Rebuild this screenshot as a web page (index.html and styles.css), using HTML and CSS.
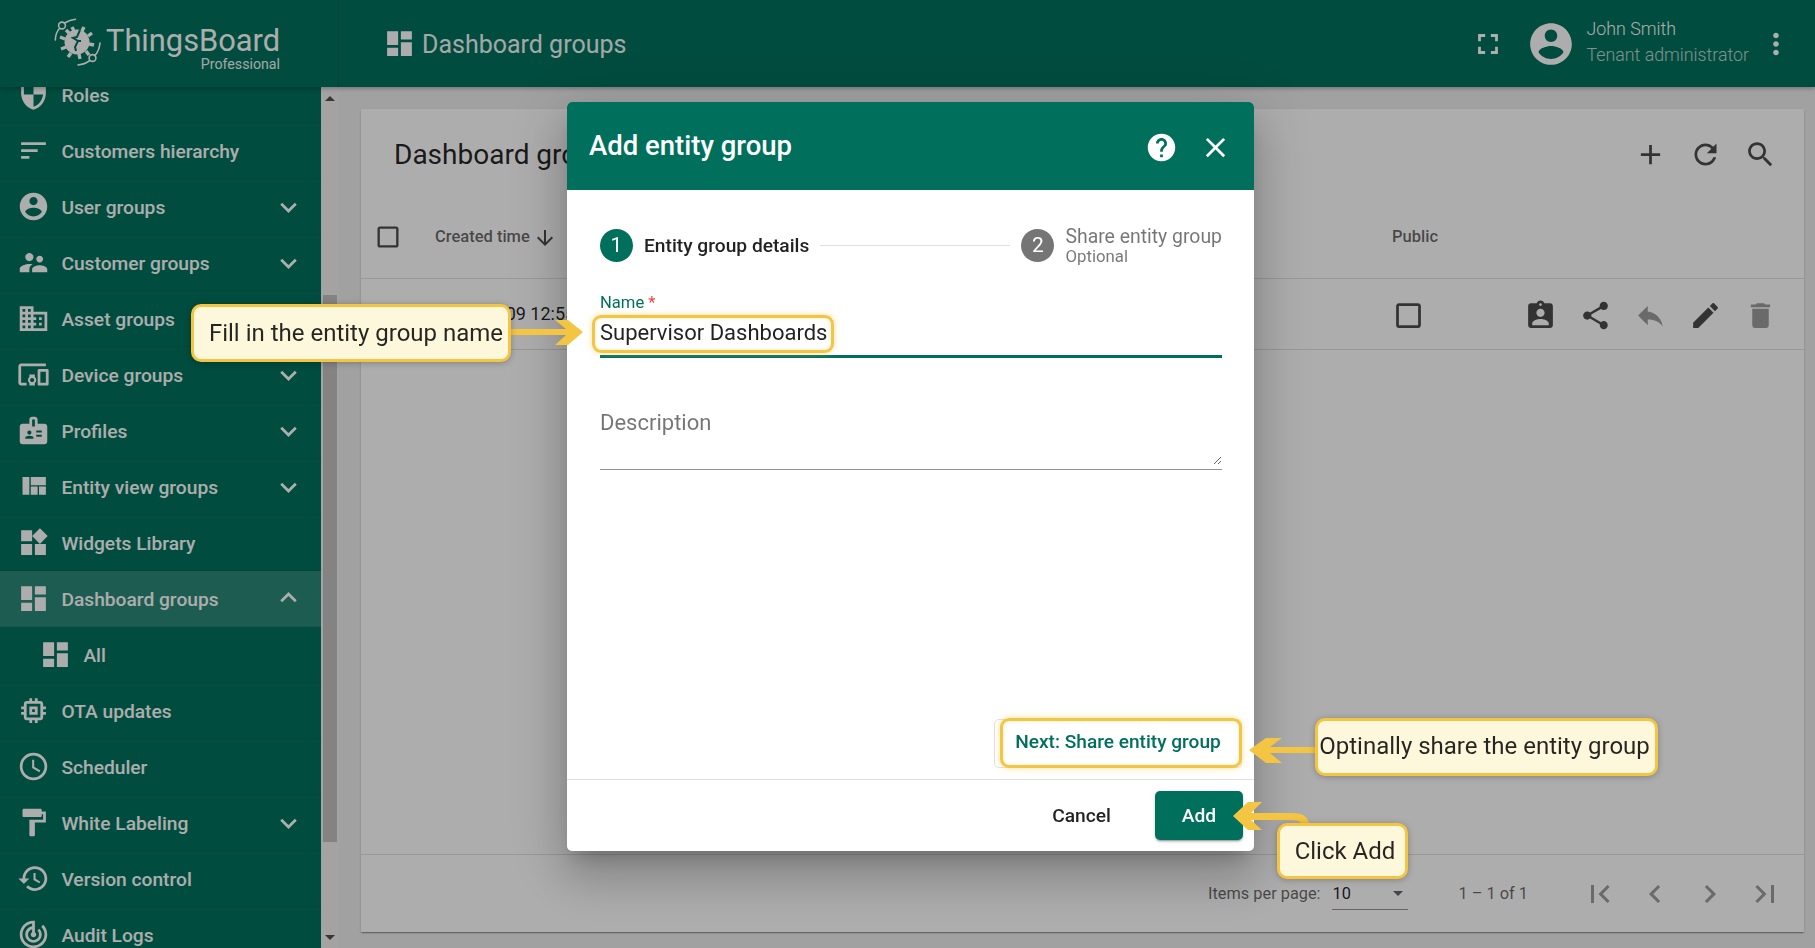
FILE: index.html
```html
<!DOCTYPE html>
<html lang="en">
<head>
<meta charset="utf-8">
<title>Add entity group</title>
<link rel="stylesheet" href="styles.css">
</head>
<body>
<svg class="sprite" aria-hidden="true">
<symbol id="i-dash" viewBox="0 0 24 24"><path d="M3 13h8V3H3v10zm0 8h8v-6H3v6zm10 0h8V11h-8v10zm0-18v6h8V3h-8z"/></symbol>
<symbol id="i-shield" viewBox="0 0 24 24"><path d="M12 1L3 5v6c0 5.55 3.84 10.74 9 12 5.16-1.26 9-6.45 9-12V5l-9-4zm0 10.99h7c-.53 4.12-3.28 7.79-7 8.94V12H5V6.3l7-3.11v8.8z"/></symbol>
<symbol id="i-sort" viewBox="0 0 24 24"><path d="M3 18h6v-2H3v2zM3 6v2h18V6H3zm0 7h12v-2H3v2z"/></symbol>
<symbol id="i-account" viewBox="0 0 24 24"><path d="M12 2C6.48 2 2 6.48 2 12s4.48 10 10 10 10-4.48 10-10S17.52 2 12 2zm0 3c1.66 0 3 1.34 3 3s-1.34 3-3 3-3-1.34-3-3 1.34-3 3-3zm0 14.2c-2.5 0-4.71-1.28-6-3.22.03-1.99 4-3.08 6-3.08 1.99 0 5.97 1.09 6 3.08-1.29 1.94-3.5 3.22-6 3.22z"/></symbol>
<symbol id="i-super" viewBox="0 0 24 24"><path d="M16.5 12c1.38 0 2.49-1.12 2.49-2.5S17.88 7 16.5 7C15.12 7 14 8.12 14 9.5s1.12 2.5 2.5 2.5zM9 11c1.66 0 2.99-1.34 2.99-3S10.66 5 9 5C7.34 5 6 6.34 6 8s1.34 3 3 3zm7.5 3c-1.83 0-5.5.92-5.5 2.75V19h11v-2.25c0-1.83-3.67-2.75-5.5-2.75zM9 13c-2.33 0-7 1.17-7 3.5V19h7v-2.25c0-.85.33-2.34 2.37-3.47C10.5 13.1 9.66 13 9 13z"/></symbol>
<symbol id="i-domain" viewBox="0 0 24 24"><path d="M12 7V3H2v18h20V7H12zM6 19H4v-2h2v2zm0-4H4v-2h2v2zm0-4H4V9h2v2zm0-4H4V5h2v2zm4 12H8v-2h2v2zm0-4H8v-2h2v2zm0-4H8V9h2v2zm0-4H8V5h2v2zm10 12h-8v-2h2v-2h-2v-2h2v-2h-2V9h8v10zm-2-8h-2v2h2v-2zm0 4h-2v2h2v-2z"/></symbol>
<symbol id="i-devices" viewBox="0 0 24 24"><path d="M3 6h18V4H3c-1.1 0-2 .9-2 2v12c0 1.1.9 2 2 2h4v-2H3V6zm10 6H9v1.78c-.61.55-1 1.33-1 2.22s.39 1.67 1 2.22V20h4v-1.78c.61-.55 1-1.34 1-2.22s-.39-1.67-1-2.22V12zm-2 5.5c-.83 0-1.5-.68-1.5-1.5s.67-1.5 1.5-1.5 1.5.68 1.5 1.5-.67 1.5-1.5 1.5zM22 8h-6c-.5 0-1 .5-1 1v10c0 .5.5 1 1 1h6c.5 0 1-.5 1-1V9c0-.5-.5-1-1-1zm-1 10h-4v-8h4v8z"/></symbol>
<symbol id="i-badge" viewBox="0 0 24 24"><path d="M20 7h-5V4c0-1.1-.9-2-2-2h-2c-1.1 0-2 .9-2 2v3H4c-1.1 0-2 .9-2 2v11c0 1.1.9 2 2 2h16c1.1 0 2-.9 2-2V9c0-1.1-.9-2-2-2zM9 12c.83 0 1.5.67 1.5 1.5S9.83 15 9 15s-1.5-.67-1.5-1.5S8.17 12 9 12zm3 6H6v-.43c0-.6.36-1.15.92-1.39.64-.28 1.34-.43 2.08-.43s1.44.15 2.08.43c.55.24.92.78.92 1.39V18zm1-9h-2V4h2v5zm5 7.5h-4V15h4v1.5zm0-3h-4V12h4v1.5z"/></symbol>
<symbol id="i-quilt" viewBox="0 0 24 24"><path d="M10 18h5v-6h-5v6zm-6 0h5V5H4v13zm12 0h5v-6h-5v6zM10 5v6h11V5H10z"/></symbol>
<symbol id="i-widgets" viewBox="0 0 24 24"><path d="M13 13v8h8v-8h-8zM3 21h8v-8H3v8zM3 3v8h8V3H3zm13.66-1.31L11 7.34 16.66 13l5.66-5.66-5.66-5.65z"/></symbol>
<symbol id="i-memory" viewBox="0 0 24 24"><path d="M15 9H9v6h6V9zm-2 4h-2v-2h2v2zm8-2V9h-2V7c0-1.1-.9-2-2-2h-2V3h-2v2h-2V3H9v2H7c-1.1 0-2 .9-2 2v2H3v2h2v2H3v2h2v2c0 1.1.9 2 2 2h2v2h2v-2h2v2h2v-2h2c1.1 0 2-.9 2-2v-2h2v-2h-2v-2h2zm-4 6H7V7h10v10z"/></symbol>
<symbol id="i-schedule" viewBox="0 0 24 24"><path d="M11.99 2C6.47 2 2 6.48 2 12s4.47 10 9.99 10C17.52 22 22 17.52 22 12S17.52 2 11.99 2zM12 20c-4.42 0-8-3.58-8-8s3.58-8 8-8 8 3.58 8 8-3.58 8-8 8zm.5-13H11v6l5.25 3.15.75-1.23-4.5-2.67z"/></symbol>
<symbol id="i-paint" viewBox="0 0 24 24"><path d="M18 4V3c0-.55-.45-1-1-1H5c-.55 0-1 .45-1 1v4c0 .55.45 1 1 1h12c.55 0 1-.45 1-1V6h1v4H9v11c0 .55.45 1 1 1h2c.55 0 1-.45 1-1v-9h8V4h-3z"/></symbol>
<symbol id="i-history" viewBox="0 0 24 24"><path d="M13 3c-4.97 0-9 4.03-9 9H1l3.89 3.89.07.14L9 12H6c0-3.87 3.13-7 7-7s7 3.13 7 7-3.13 7-7 7c-1.93 0-3.68-.79-4.94-2.06l-1.42 1.42C8.27 19.99 10.51 21 13 21c4.97 0 9-4.03 9-9s-4.03-9-9-9zm-1 5v5l4.28 2.54.72-1.21-3.5-2.08V8H12z"/></symbol>
<symbol id="i-track" viewBox="0 0 24 24"><path d="M19.07 4.93l-1.41 1.41C19.1 7.79 20 9.79 20 12c0 4.42-3.58 8-8 8s-8-3.58-8-8c0-4.08 3.05-7.44 7-7.93v2.02C8.16 6.57 6 9.03 6 12c0 3.31 2.69 6 6 6s6-2.69 6-6c0-1.66-.67-3.16-1.76-4.24l-1.41 1.41C15.55 9.9 16 10.9 16 12c0 2.21-1.79 4-4 4s-4-1.79-4-4c0-1.86 1.28-3.41 3-3.86v2.14c-.6.35-1 .98-1 1.72 0 1.1.9 2 2 2s2-.9 2-2c0-.74-.4-1.38-1-1.72V2h-1C6.48 2 2 6.48 2 12s4.48 10 10 10 10-4.48 10-10c0-2.76-1.12-5.26-2.93-7.07z"/></symbol>
<symbol id="i-more" viewBox="0 0 24 24"><path d="M16.59 8.59L12 13.17 7.41 8.59 6 10l6 6 6-6z"/></symbol>
<symbol id="i-less" viewBox="0 0 24 24"><path d="M12 8l-6 6 1.41 1.41L12 10.83l4.59 4.58L18 14z"/></symbol>
<symbol id="i-full" viewBox="0 0 24 24"><path d="M7 14H5v5h5v-2H7v-3zm-2-4h2V7h3V5H5v5zm12 7h-3v2h5v-5h-2v3zM14 5v2h3v3h2V5h-5z"/></symbol>
<symbol id="i-vert" viewBox="0 0 24 24"><path d="M12 8c1.1 0 2-.9 2-2s-.9-2-2-2-2 .9-2 2 .9 2 2 2zm0 2c-1.1 0-2 .9-2 2s.9 2 2 2 2-.9 2-2-.9-2-2-2zm0 6c-1.1 0-2 .9-2 2s.9 2 2 2 2-.9 2-2-.9-2-2-2z"/></symbol>
<symbol id="i-add" viewBox="0 0 24 24"><path d="M19 13h-6v6h-2v-6H5v-2h6V5h2v6h6v2z"/></symbol>
<symbol id="i-refresh" viewBox="0 0 24 24"><path d="M17.65 6.35C16.2 4.9 14.21 4 12 4c-4.42 0-7.99 3.58-7.99 8s3.57 8 7.99 8c3.73 0 6.84-2.55 7.73-6h-2.08c-.82 2.33-3.04 4-5.65 4-3.31 0-6-2.69-6-6s2.69-6 6-6c1.66 0 3.14.69 4.22 1.78L13 11h7V4l-2.35 2.35z"/></symbol>
<symbol id="i-search" viewBox="0 0 24 24"><path d="M15.5 14h-.79l-.28-.27C15.41 12.59 16 11.11 16 9.5 16 5.91 13.09 3 9.5 3S3 5.91 3 9.5 5.91 16 9.5 16c1.61 0 3.09-.59 4.23-1.57l.27.28v.79l5 4.99L20.49 19l-4.99-5zm-6 0C7.01 14 5 11.99 5 9.5S7.01 5 9.5 5 14 7.01 14 9.5 11.99 14 9.5 14z"/></symbol>
<symbol id="i-assign" viewBox="0 0 24 24"><path d="M19 3h-4.18C14.4 1.84 13.3 1 12 1c-1.3 0-2.4.84-2.82 2H5c-1.1 0-2 .9-2 2v14c0 1.1.9 2 2 2h14c1.1 0 2-.9 2-2V5c0-1.1-.9-2-2-2zm-7 0c.55 0 1 .45 1 1s-.45 1-1 1-1-.45-1-1 .45-1 1-1zm0 4c1.66 0 3 1.34 3 3s-1.34 3-3 3-3-1.34-3-3 1.34-3 3-3zm6 12H6v-1.4c0-2 4-3.1 6-3.1s6 1.1 6 3.1V19z"/></symbol>
<symbol id="i-share" viewBox="0 0 24 24"><path d="M18 16.08c-.76 0-1.44.3-1.96.77L8.91 12.7c.05-.23.09-.46.09-.7s-.04-.47-.09-.7l7.05-4.11c.54.5 1.25.81 2.04.81 1.66 0 3-1.34 3-3s-1.34-3-3-3-3 1.34-3 3c0 .24.04.47.09.7L8.04 9.81C7.5 9.31 6.79 9 6 9c-1.66 0-3 1.34-3 3s1.34 3 3 3c.79 0 1.5-.31 2.04-.81l7.12 4.16c-.05.21-.08.43-.08.65 0 1.61 1.31 2.92 2.92 2.92 1.61 0 2.92-1.31 2.92-2.92s-1.31-2.92-2.92-2.92z"/></symbol>
<symbol id="i-reply" viewBox="0 0 24 24"><path d="M10 9V5l-7 7 7 7v-4.1c5 0 8.5 1.6 11 5.1-1-5-4-10-11-11z"/></symbol>
<symbol id="i-edit" viewBox="0 0 24 24"><path d="M3 17.25V21h3.75L17.81 9.94l-3.75-3.75L3 17.25zM20.71 7.04c.39-.39.39-1.02 0-1.41l-2.34-2.34c-.39-.39-1.02-.39-1.41 0l-1.83 1.83 3.75 3.75 1.83-1.83z"/></symbol>
<symbol id="i-delete" viewBox="0 0 24 24"><path d="M6 19c0 1.1.9 2 2 2h8c1.1 0 2-.9 2-2V7H6v12zM19 4h-3.5l-1-1h-5l-1 1H5v2h14V4z"/></symbol>
<symbol id="i-help" viewBox="0 0 24 24"><path d="M12 2C6.48 2 2 6.48 2 12s4.48 10 10 10 10-4.48 10-10S17.52 2 12 2zm1 17h-2v-2h2v2zm2.07-7.75l-.9.92C13.45 12.9 13 13.5 13 15h-2v-.5c0-1.1.45-2.1 1.17-2.83l1.24-1.26c.37-.36.59-.86.59-1.41 0-1.1-.9-2-2-2s-2 .9-2 2H8c0-2.21 1.79-4 4-4s4 1.79 4 4c0 .88-.36 1.68-.93 2.25z"/></symbol>
<symbol id="i-close" viewBox="0 0 24 24"><path d="M19 6.41L17.59 5 12 10.59 6.41 5 5 6.41 10.59 12 5 17.59 6.41 19 12 13.41 17.59 19 19 17.59 13.41 12z"/></symbol>
<symbol id="i-first" viewBox="0 0 24 24"><path d="M18.41 16.59L13.82 12l4.59-4.59L17 6l-6 6 6 6zM6 6h2v12H6z"/></symbol>
<symbol id="i-left" viewBox="0 0 24 24"><path d="M15.41 7.41L14 6l-6 6 6 6 1.41-1.41L10.83 12z"/></symbol>
<symbol id="i-right" viewBox="0 0 24 24"><path d="M10 6L8.59 7.41 13.17 12l-4.58 4.59L10 18l6-6z"/></symbol>
<symbol id="i-last" viewBox="0 0 24 24"><path d="M5.59 7.41L10.18 12l-4.59 4.59L7 18l6-6-6-6zM16 6h2v12h-2z"/></symbol>
<symbol id="i-down" viewBox="0 0 24 24"><path d="M20 12l-1.41-1.41L13 16.17V4h-2v12.17l-5.58-5.59L4 12l8 8 8-8z"/></symbol>
<symbol id="i-check" viewBox="0 0 24 24"><path d="M19 5v14H5V5h14m0-2H5c-1.1 0-2 .9-2 2v14c0 1.1.9 2 2 2h14c1.1 0 2-.9 2-2V5c0-1.1-.9-2-2-2z"/></symbol>
</svg>

<div class="app">
  <header class="topbar">
    <div class="brand">
      <svg class="brand-logo" viewBox="0 0 48 48">
        <g class="logo-line">
          <circle cx="8" cy="7.5" r="3.4"/>
          <circle cx="38.5" cy="40" r="3.4"/>
          <path d="M10.500 5C14 3 17 1.800 21.500 1.300M5.500 10.500C3 13 1.600 16 1.300 22"/>
          <path d="M35.800 42.500C32 45.400 28 46.600 24 47M41 37.500C44 34 45.500 30.500 46 25"/>
        </g>
        <g class="logo-spike">
          <path d="M20 13l-2-4M28 13l2-4M34 18l4-3M35 26l5 1M32 33l3 4M25 36l1 5M17 35l-3 4M12 29l-5 2M11 21l-5-2M15 15l-3-3"/>
        </g>
        <circle class="logo-core" cx="23" cy="24" r="12.500"/>
        <path class="logo-bolt" d="M26 12l-3 7-4 1 5 3-3 6 1 4M27 23l-3 0"/>
      </svg>
      <div class="brand-text">
        <span class="brand-name">ThingsBoard</span>
        <span class="brand-sub">Professional</span>
      </div>
    </div>
    <svg class="ic-title"><use href="#i-dash"/></svg>
    <span class="page-title">Dashboard groups</span>
    <span class="grow"></span>
    <svg class="ic-34 gap-full"><use href="#i-full"/></svg>
    <svg class="ic-avatar"><use href="#i-account"/></svg>
    <div class="user">
      <span class="user-name">John Smith</span>
      <span class="user-role">Tenant administrator</span>
    </div>
    <svg class="ic-34 gap-vert"><use href="#i-vert"/></svg>
  </header>

  <div class="body">
    <nav class="sidebar">
      <div class="menu">
        <a class="item"><svg class="ic"><use href="#i-shield"/></svg><span class="label">Roles</span></a>
        <a class="item"><svg class="ic"><use href="#i-sort"/></svg><span class="label">Customers hierarchy</span></a>
        <a class="item"><svg class="ic"><use href="#i-account"/></svg><span class="label">User groups</span><svg class="ic"><use href="#i-more"/></svg></a>
        <a class="item"><svg class="ic"><use href="#i-super"/></svg><span class="label">Customer groups</span><svg class="ic"><use href="#i-more"/></svg></a>
        <a class="item"><svg class="ic"><use href="#i-domain"/></svg><span class="label">Asset groups</span><svg class="ic"><use href="#i-more"/></svg></a>
        <a class="item"><svg class="ic"><use href="#i-devices"/></svg><span class="label">Device groups</span><svg class="ic"><use href="#i-more"/></svg></a>
        <a class="item"><svg class="ic"><use href="#i-badge"/></svg><span class="label">Profiles</span><svg class="ic"><use href="#i-more"/></svg></a>
        <a class="item"><svg class="ic"><use href="#i-quilt"/></svg><span class="label">Entity view groups</span><svg class="ic"><use href="#i-more"/></svg></a>
        <a class="item"><svg class="ic"><use href="#i-widgets"/></svg><span class="label">Widgets Library</span></a>
        <a class="item active"><svg class="ic"><use href="#i-dash"/></svg><span class="label">Dashboard groups</span><svg class="ic"><use href="#i-less"/></svg></a>
        <a class="item sub"><svg class="ic"><use href="#i-dash"/></svg><span class="label">All</span></a>
        <a class="item"><svg class="ic"><use href="#i-memory"/></svg><span class="label">OTA updates</span></a>
        <a class="item"><svg class="ic"><use href="#i-schedule"/></svg><span class="label">Scheduler</span></a>
        <a class="item"><svg class="ic"><use href="#i-paint"/></svg><span class="label">White Labeling</span><svg class="ic"><use href="#i-more"/></svg></a>
        <a class="item"><svg class="ic"><use href="#i-history"/></svg><span class="label">Version control</span></a>
        <a class="item"><svg class="ic"><use href="#i-track"/></svg><span class="label">Audit Logs</span></a>
      </div>
    </nav>
    <div class="scrollbar">
      <span class="sb-arrow"><i class="tri-up"></i></span>
      <span class="sb-thumb"></span>
      <span class="grow"></span>
      <span class="sb-arrow"><i class="tri-down"></i></span>
    </div>
    <main class="main">
      <section class="card">
        <div class="card-head">
          <h1 class="card-title">Dashboard groups</h1>
          <div class="icon-row">
            <svg class="ic"><use href="#i-add"/></svg>
            <svg class="ic"><use href="#i-refresh"/></svg>
            <svg class="ic"><use href="#i-search"/></svg>
          </div>
        </div>
        <div class="row head-row">
          <svg class="ic-28"><use href="#i-check"/></svg>
          <span class="th">Created time <svg class="ic-sort"><use href="#i-down"/></svg></span>
          <span class="th">Public</span>
          <span></span>
        </div>
        <div class="row data-row">
          <svg class="ic-28"><use href="#i-check"/></svg>
          <span class="td">2023-03-09 12:55:17</span>
          <svg class="ic"><use href="#i-check"/></svg>
          <div class="icon-row">
            <svg class="ic"><use href="#i-assign"/></svg>
            <svg class="ic"><use href="#i-share"/></svg>
            <svg class="ic dim"><use href="#i-reply"/></svg>
            <svg class="ic"><use href="#i-edit"/></svg>
            <svg class="ic dim"><use href="#i-delete"/></svg>
          </div>
        </div>
        <div class="grow"></div>
        <div class="pager">
          <span class="pager-label">Items per page:</span>
          <span class="pager-select">10<i class="tri-select"></i></span>
          <span class="pager-range">1 – 1 of 1</span>
          <div class="icon-row pager-icons">
            <svg class="ic-36 dim"><use href="#i-first"/></svg>
            <svg class="ic-36 dim"><use href="#i-left"/></svg>
            <svg class="ic-36 dim"><use href="#i-right"/></svg>
            <svg class="ic-36 dim"><use href="#i-last"/></svg>
          </div>
        </div>
      </section>
    </main>
  </div>
</div>

<div class="backdrop"></div>

<div class="dialog">
  <div class="dlg-head">
    <h2 class="dlg-title">Add entity group</h2>
    <svg class="ic"><use href="#i-help"/></svg>
    <svg class="ic"><use href="#i-close"/></svg>
  </div>
  <div class="dlg-body">
    <div class="stepper">
      <span class="step-num on">1</span>
      <span class="step-title">Entity group details</span>
      <span class="step-line"></span>
      <span class="step-num off">2</span>
      <span class="step-text"><span class="step-title2">Share entity group</span><span class="step-opt">Optional</span></span>
    </div>
    <label class="name-label">Name <span class="req">*</span></label>
    <input class="name-input" type="text" value="Supervisor Dashboards">
    <div class="desc-field"><textarea class="desc" placeholder="Description"></textarea></div>
    <span class="grow"></span>
    <div class="next-row"><button class="next-btn" type="button">Next: Share entity group</button></div>
  </div>
  <div class="dlg-foot">
    <button class="cancel-btn" type="button">Cancel</button>
    <button class="add-btn" type="button">Add</button>
  </div>
</div>

<div class="hl hl-name"></div>
<div class="hl hl-next"></div>

<svg class="arrows" viewBox="0 0 1815 948">
  <path class="arrow-fill" d="M583 332L568 320H555L566 329H511V335H566L555 345H568Z"/>
  <path class="arrow-fill" d="M1249 750L1266 738H1282L1270 747H1316V753H1270L1282 763H1266Z"/>
  <path class="arrow-fill" d="M1233 816L1248 802H1262L1251 813V820L1262 830H1248Z"/>
  <path class="arrow-line" d="M1250 816.500H1293Q1306 816.500 1306 828"/>
</svg>

<div class="callout c-fill">Fill in the entity group name</div>
<div class="callout c-share">Optinally share the entity group</div>
<div class="callout c-add">Click Add</div>
</body>
</html>
```

FILE: styles.css
```css
* { box-sizing: border-box; }
html, body { margin: 0; height: 100%; overflow: hidden; }
body { font-family: Roboto, "Liberation Sans", sans-serif; color: rgba(0,0,0,.87); background: #eee; }
svg { display: block; fill: currentColor; flex: none; }
.sprite { position: absolute; width: 0; height: 0; }
.grow { flex: 1; }
.app { display: flex; flex-direction: column; height: 948px; }

.topbar { display: flex; align-items: center; height: 87px; flex: none; background: #00705c; color: #fff; box-shadow: 0 2px 4px rgba(0,0,0,.25); position: relative; }
.brand { display: flex; align-items: flex-start; width: 339px; height: 87px; padding: 18px 0 0 54px; border-right: 1px solid rgba(0,0,0,.1); flex: none; }
.brand-logo { width: 48px; height: 48px; }
.logo-line { fill: none; stroke: #fff; stroke-width: 1.6; stroke-linecap: round; }
.logo-spike { fill: none; stroke: #fff; stroke-width: 3.4; }
.logo-core { fill: #fff; }
.logo-bolt { fill: none; stroke: #00705c; stroke-width: 2; }
.brand-text { display: flex; flex-direction: column; align-items: flex-end; margin-left: 4px; }
.brand-name { font-size: 30.8px; line-height: 37px; margin-top: 4px; }
.brand-sub { font-size: 14.2px; line-height: 16px; margin-top: -3px; opacity: .95; }
.ic-title { width: 33px; height: 33px; margin-left: 44px; }
.page-title { font-size: 25px; margin-left: 6px; margin-top: 2px; opacity: .95; }
.ic-34 { width: 34px; height: 34px; }
.gap-full { margin-right: 21px; }
.ic-avatar { width: 50px; height: 50px; margin-right: 11px; }
.user { display: flex; flex-direction: column; font-weight: 300; font-size: 17.8px; line-height: 26px; margin-top: -4px; }
.user-role { opacity: .72; }
.gap-vert { margin: 0 22px 0 10px; }

.body { display: flex; flex: 1; min-height: 0; }
.sidebar { width: 321px; flex: none; background: #00705c; overflow: hidden; color: #fff; }
.menu { margin-top: -20px; }
.item { display: flex; align-items: center; height: 56px; padding: 0 16.500px 0 17px; border-bottom: 1px solid rgba(0,0,0,.07); font-size: 19.2px; font-weight: 500; }
.item.active { background: rgba(255,255,255,.17); }
.item.sub { padding-left: 39px; }
.ic { width: 33px; height: 33px; }
.ic-28 { width: 28px; height: 28px; }
.ic-36 { width: 36px; height: 36px; }
.label { flex: 1; margin-left: 11.4px; padding-top: 1px; white-space: nowrap; }
.label + .ic { margin-top: 2px; }
.active .label + .ic { margin-top: -2px; }

.scrollbar { width: 18px; flex: none; background: #f1f1f1; display: flex; flex-direction: column; align-items: center; }
.sb-arrow { height: 22px; flex: none; display: flex; align-items: center; justify-content: center; }
.sb-thumb { width: 14px; height: 547px; margin-top: 186px; background: #c1c1c1; }
.tri-up { border: 5px solid transparent; border-top: 0; border-bottom-color: #505050; }
.tri-down { border: 5px solid transparent; border-bottom: 0; border-top-color: #505050; }

.main { flex: 1; min-width: 0; padding: 22px 11px 16px 22px; }
.card { display: flex; flex-direction: column; height: 823px; background: #fff; box-shadow: 0 2px 1px -1px rgba(0,0,0,.2), 0 1px 1px rgba(0,0,0,.14), 0 1px 3px rgba(0,0,0,.12); color: rgba(0,0,0,.87); }
.card-head { display: flex; align-items: center; justify-content: space-between; height: 90px; padding: 0 27.500px 0 33px; flex: none; }
.card-title { margin: 0; font-size: 28px; font-weight: 400; }
.icon-row { display: flex; gap: 22px; color: rgba(0,0,0,.7); }
.pager-icons { gap: 19px; }
.dim { opacity: .55; }
.row { display: grid; grid-template-columns: 61px 957px 131.500px 1fr; align-items: center; padding-left: 13px; border-bottom: 1px solid rgba(0,0,0,.12); flex: none; }
.head-row { height: 80px; padding-bottom: 4px; color: rgba(0,0,0,.7); }
.data-row { height: 71px; padding-top: 2px; color: rgba(0,0,0,.7); }
.th { display: flex; align-items: center; gap: 3px; font-size: 16.5px; font-weight: 500; color: rgba(0,0,0,.6); }
.ic-sort { width: 24px; height: 24px; color: rgba(0,0,0,.7); margin-top: 3px; }
.td { font-size: 18px; color: rgba(0,0,0,.87); margin-top: -3px; }
.pager { display: flex; align-items: center; height: 78px; padding: 0 21px 0 0; justify-content: flex-end; border-top: 1px solid rgba(0,0,0,.12); font-size: 16.33px; color: rgba(0,0,0,.6); flex: none; }
.pager-select { display: flex; align-items: center; justify-content: space-between; width: 76px; height: 33px; margin: 0 0 0 11px; padding: 0 5px 0 1px; font-size: 16.33px; border-bottom: 1px solid rgba(0,0,0,.42); color: rgba(0,0,0,.87); }
.tri-select { border: 5.500px solid transparent; border-bottom: 0; border-top-color: rgba(0,0,0,.6); }
.pager-range { margin: 0 54px 0 51px; }

.backdrop { position: fixed; inset: 0; background: rgba(0,0,0,.32); }

.dialog { position: absolute; left: 567px; top: 102px; width: 687px; height: 749px; display: flex; flex-direction: column; background: #fff; border-radius: 5px; overflow: hidden; }
.dialog { box-shadow: 0 13px 18px -8px rgba(0,0,0,.2), 0 28px 44px 4px rgba(0,0,0,.14), 0 10px 54px 9px rgba(0,0,0,.12); }
.dlg-head { display: flex; align-items: center; gap: 21px; height: 88px; padding: 2px 22px 0; background: #00705c; color: #fff; flex: none; }
.dlg-title { flex: 1; margin: -4px 0 0; font-size: 27.5px; font-weight: 500; }
.dlg-body { flex: 1; display: flex; flex-direction: column; padding: 35px 32px 11px 33px; min-height: 0; }
.stepper { display: flex; align-items: center; height: 40px; flex: none; }
.step-num { width: 33px; height: 33px; border-radius: 50%; color: #fff; display: flex; align-items: center; justify-content: center; font-size: 21px; flex: none; }
.step-num.on { background: #00705c; }
.step-num.off { background: #757575; }
.step-title { font-size: 19.2px; font-weight: 500; margin: 0 11px; }
.step-line { flex: 1; height: 1px; background: rgba(0,0,0,.12); margin-right: 11px; }
.step-text { display: flex; flex-direction: column; margin: -2px 0 0 11px; }
.step-title2 { font-size: 19.4px; line-height: 23px; color: rgba(0,0,0,.54); }
.step-opt { font-size: 16.8px; line-height: 16px; color: rgba(0,0,0,.54); }
.name-label { font-size: 16.6px; line-height: 20px; color: #00705c; margin-top: 28px; }
.req { color: #f44336; }
.name-input { display: block; width: 100%; height: 40px; padding: 0 0 8px; margin-top: 5px; border: 0; outline: 0; border-bottom: 3px solid #00705c; font: 400 22px Roboto, sans-serif; color: rgba(0,0,0,.87); background: transparent; flex: none; }
.desc-field { margin-top: 42px; border-bottom: 1px solid rgba(0,0,0,.42); height: 70px; padding-bottom: 4px; flex: none; }
.desc { display: block; width: 100%; height: 65px; padding: 11px 0 0; border: 0; outline: 0; resize: vertical; font: 400 22px Roboto, sans-serif; line-height: 24px; }
.desc::placeholder { color: rgba(0,0,0,.54); opacity: 1; }
.next-row { display: flex; justify-content: flex-end; margin-right: -20px; flex: none; }
.next-btn { width: 248px; height: 49px; background: #fff; border: 1px solid rgba(0,0,0,.12); border-radius: 5px; color: #00705c; font: 500 19.1px Roboto, sans-serif; padding: 0 0 4px; }
.dlg-foot { display: flex; align-items: center; justify-content: flex-end; height: 72px; padding: 0 11px 0 0; border-top: 1px solid rgba(0,0,0,.12); flex: none; }
.cancel-btn { width: 103px; height: 49px; margin-right: 22px; background: none; border: 0; font: 500 19.2px Roboto, sans-serif; color: rgba(0,0,0,.87); }
.add-btn { width: 88px; height: 49px; background: #00705c; color: #fff; border: 0; border-radius: 5px; font: 500 19.2px Roboto, sans-serif; box-shadow: 0 3px 1px -2px rgba(0,0,0,.2), 0 2px 2px rgba(0,0,0,.14), 0 1px 5px rgba(0,0,0,.12); }

.hl { position: absolute; border: 3px solid #f4c542; border-radius: 9px; box-shadow: 0 0 6px rgba(244,197,66,.55), inset 0 0 4px rgba(244,197,66,.3); pointer-events: none; }
.hl-name { left: 592px; top: 315px; width: 242px; height: 38px; }
.hl-next { left: 1000px; top: 718px; width: 242px; height: 50px; }
.arrows { position: absolute; left: 0; top: 0; width: 1815px; height: 948px; pointer-events: none; }
.arrow-fill { fill: #f4c542; }
.arrow-line { fill: none; stroke: #f4c542; stroke-width: 7; }

.callout { position: absolute; display: flex; align-items: center; justify-content: center; background: #fdf8dc; border: 3px solid #f4c542; border-radius: 10px; color: rgba(0,0,0,.85); font-size: 24px; white-space: nowrap; box-shadow: 0 1px 6px rgba(0,0,0,.25); }
.c-fill { left: 191px; top: 304px; width: 320px; height: 58px; padding-left: 10px; }
.c-share { left: 1315px; top: 718px; width: 343px; height: 58px; padding: 0 4px 3px 0; }
.c-add { left: 1277px; top: 823px; width: 131px; height: 56px; padding: 0 0 1px 5px; }
```
